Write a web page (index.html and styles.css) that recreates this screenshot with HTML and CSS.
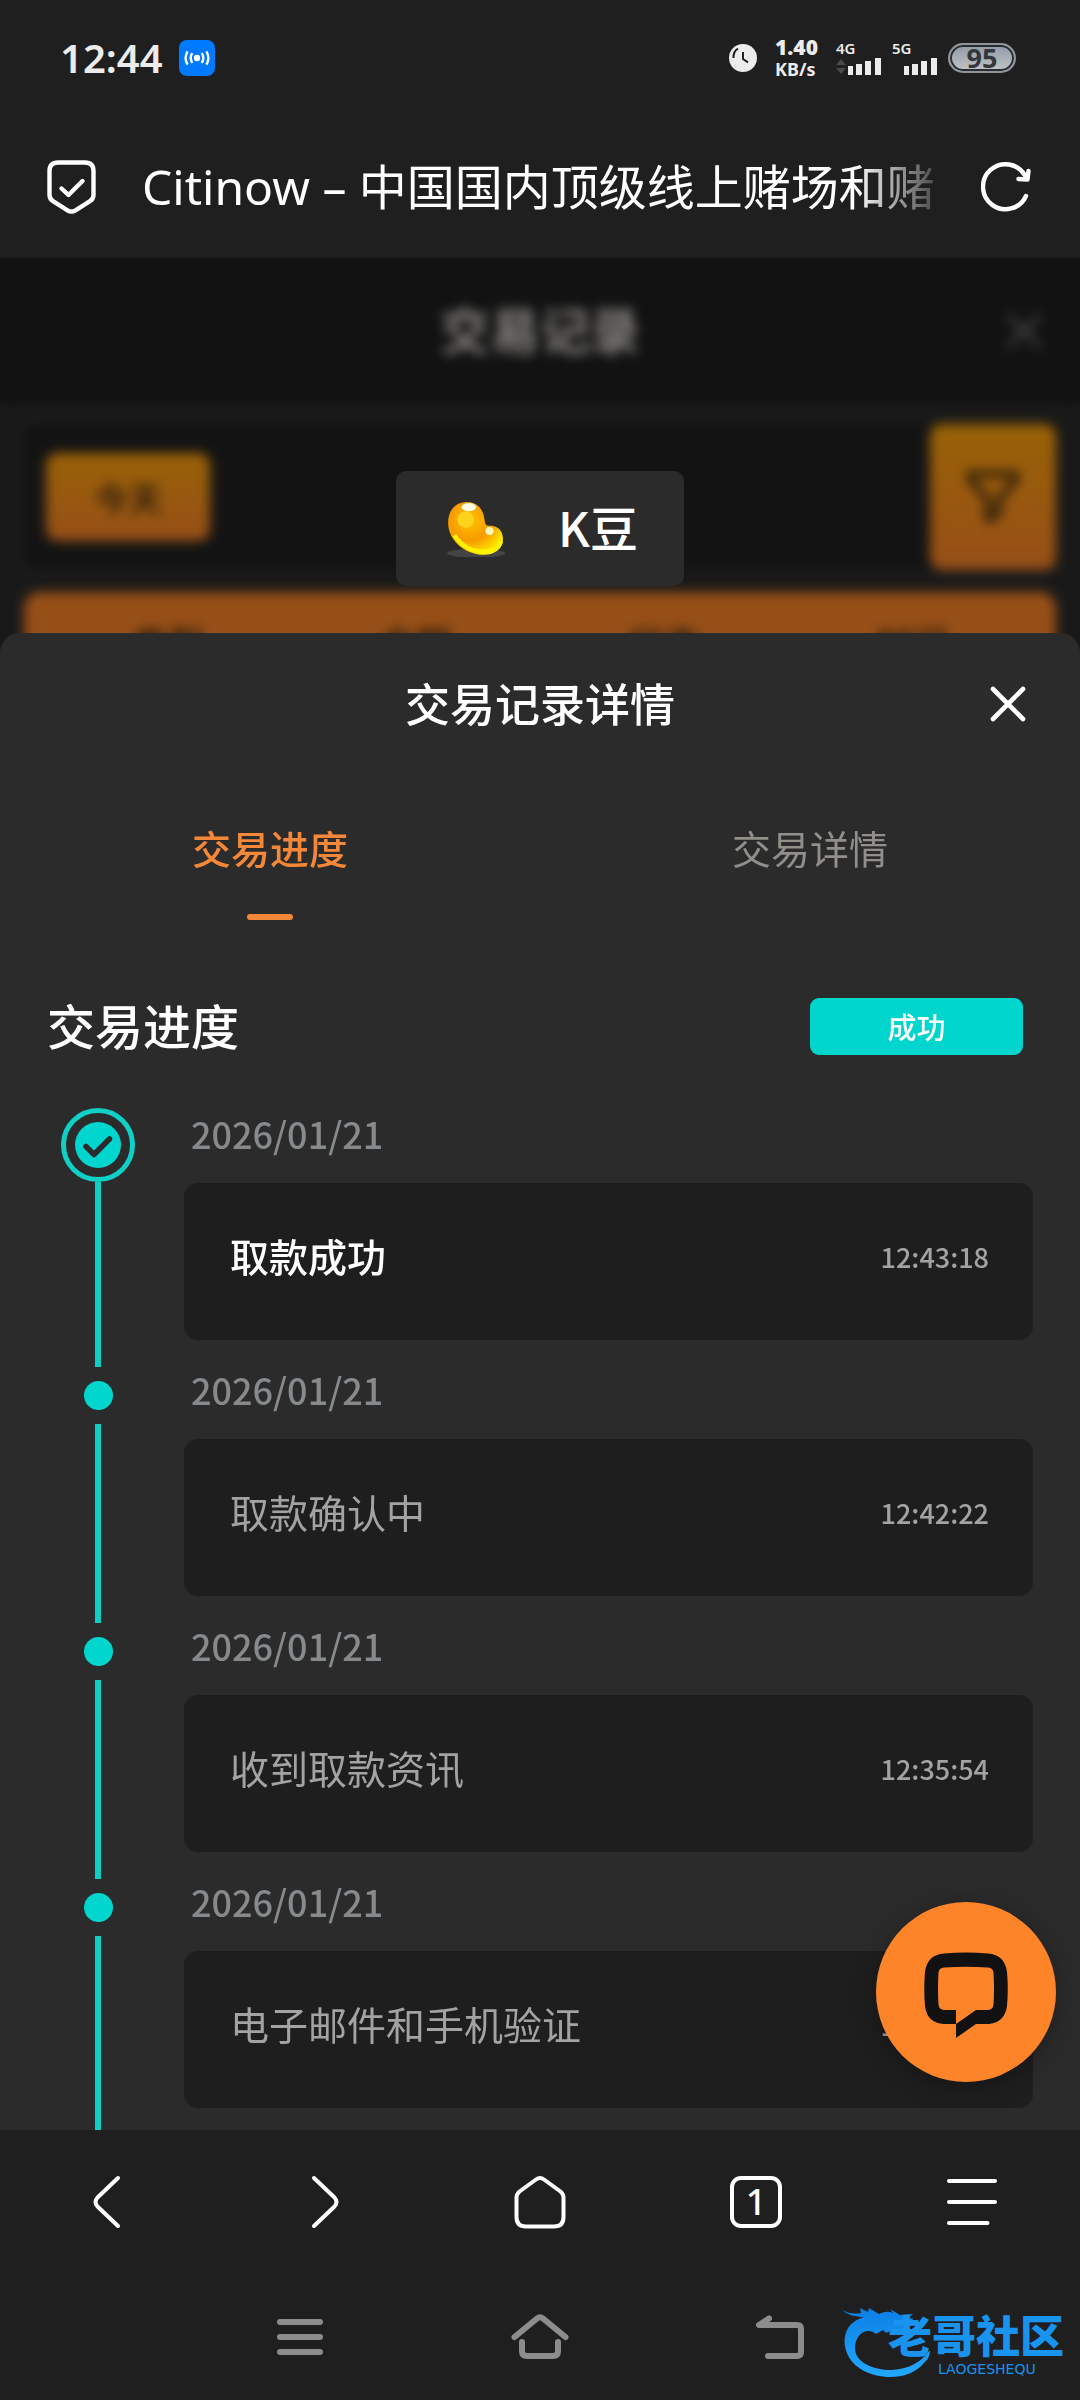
FILE: index.html
```
<!DOCTYPE html>
<html lang="zh-CN">

<head>
    <meta charset="UTF-8">
    <meta name="viewport" content="width=device-width, initial-scale=1.0">
    <title>Citinow – 交易记录详情</title>
    <link rel="stylesheet" href="styles.css">
</head>

<body>
    <!-- Status bar -->
    <div class="status-bar">
        <div class="status-left">
            <span class="clock-text">12:44</span>
            <svg class="cast" viewBox="0 0 36 36">
                <rect width="36" height="36" rx="8" fill="#007aff"/>
                <circle cx="18" cy="18" r="3.2" fill="#fff"/>
                <path d="M13.2 13.2q-3 4.8 0 9.6M22.8 13.2q3 4.8 0 9.6M8.6 11.4q-4 6.6 0 13.2M27.4 11.4q4 6.6 0 13.2" fill="none" stroke="#fff" stroke-width="2.4"/>
            </svg>
        </div>
        <div class="status-right">
            <svg class="alarm" viewBox="0 0 28 28">
                <circle cx="14" cy="14" r="14" fill="#ececec"/>
                <path d="M14 8v7l5 3.4M4.4 14q0-7 4.6-9.4" fill="none" stroke="#1f1f1f" stroke-width="2" stroke-dasharray="20"/>
            </svg>
            <div class="speed"><b>1.40</b><span>KB/s</span></div>
            <div class="radio">
                <div class="signal">
                    <span>4G</span>
                    <svg viewBox="0 0 46 20">
                        <path d="M0 9l5-6 5 6zM0 12l5 6 5-6z" fill="#4a4a4a"/>
                        <path d="M12 10h5v9h-5zM20 8h6v11h-6zM29 5h6v14h-6zM39 2h6v17h-6z" fill="#ececec"/>
                    </svg>
                </div>
                <div class="signal">
                    <span>5G</span>
                    <svg viewBox="0 0 46 20">
                        <path d="M12 10h5v9h-5zM20 8h6v11h-6zM29 5h6v14h-6zM39 2h6v17h-6z" fill="#ececec"/>
                    </svg>
                </div>
                <div class="battery">95</div>
            </div>
        </div>
    </div>

    <!-- Address bar -->
    <div class="address-bar">
        <button class="icon-btn" aria-label="安全">
            <svg class="shield" viewBox="0 0 49 54" fill="none" stroke="#fff" stroke-width="4.4" stroke-linecap="round" stroke-linejoin="round">
                <path d="M11 2.5h27q8.500 0 8.500 8.500v24q0 4-3.500 6.200L28.500 50.300q-4 2.400-8 0L6 41.200Q2.500 39 2.500 35V11q0-8.500 8.500-8.500z"/>
                <path d="M14.500 28.500l7 6.500 14-14"/>
            </svg>
        </button>
        <div class="page-title">Citinow – 中国国内顶级线上赌场和赌</div>
        <button class="icon-btn" aria-label="刷新">
            <svg class="reload" viewBox="0 0 50 50" fill="none" stroke="#fff" stroke-width="4.400" stroke-linecap="round" stroke-linejoin="round">
                <path d="M45 34A22.500 22.500 0 1 1 44 13.500"/>
                <path d="M47.500 9l-1 8.500-9-.500"/>
            </svg>
        </button>
    </div>

    <div class="viewport">
        <!-- Records page under the sheet -->
        <div class="records">
            <div class="records-header">
                <h2>交易记录</h2>
                <svg class="records-close" viewBox="0 0 36 36" stroke="#6a6a6a" stroke-width="5" stroke-linecap="round">
                    <path d="M3 3l30 30M33 3L3 33"/>
                </svg>
            </div>
            <div class="filter-bar">
                <button class="today">今天</button>
                <button class="filter" aria-label="筛选">
                    <svg viewBox="0 0 54 54" fill="none" stroke="#3a2a10" stroke-width="6" stroke-linejoin="round">
                        <path d="M4 4h46v6L33 29v14l-11 7V29L4 10z"/>
                    </svg>
                </button>
            </div>
            <div class="records-columns">
                <span>类型</span><span>金额</span><span>状态</span><span>时间</span>
            </div>
        </div>
        <div class="overlay"></div>

        <div class="toast">
            <svg class="bean" viewBox="0 0 58 54">
                <defs>
                    <radialGradient id="gold" cx="0.4" cy="0.35" r="0.7">
                        <stop offset="0" stop-color="#ffc400"/>
                        <stop offset="0.55" stop-color="#f79a00"/>
                        <stop offset="1" stop-color="#fff000"/>
                    </radialGradient>
                </defs>
                <ellipse cx="29" cy="49.500" rx="28" ry="4.500" fill="#444"/>
                <path d="M20 0C30 0 36 7 37 16c1 6 1 7 6 7 7 0 12 5 12 13 0 9-8 15-18 15C18 51 2 37 2 20 2 8 9 0 20 0z" fill="url(#gold)"/>
                <circle cx="19" cy="17" r="8" fill="#ffd21e"/>
                <ellipse cx="22" cy="5" rx="7" ry="4" fill="#fffbe0"/>
                <ellipse cx="42" cy="28" rx="4" ry="4" fill="#fff7b8"/>
                <path d="M8 32q10 16 30 16 13-1 15-10" fill="none" stroke="#fff200" stroke-width="4"/>
            </svg>
            <span>K豆</span>
        </div>

        <!-- Detail sheet -->
        <div class="sheet">
            <div class="sheet-header">
                <h1>交易记录详情</h1>
                <button class="sheet-close" aria-label="关闭">
                    <svg viewBox="0 0 36 36" stroke="#fff" stroke-width="4.600" stroke-linecap="round">
                        <path d="M3 3l30 30M33 3L3 33"/>
                    </svg>
                </button>
            </div>

            <div class="tabs" role="tablist">
                <button class="tab active" role="tab">交易进度</button>
                <button class="tab" role="tab">交易详情</button>
            </div>

            <div class="section-head">
                <h2>交易进度</h2>
                <span class="state">成功</span>
            </div>

            <ul class="timeline">
                <li class="step done">
                    <div class="marker">
                        <svg class="check" viewBox="0 0 74 74">
                            <circle cx="37" cy="37" r="34.500" fill="none" stroke="#0fd0c6" stroke-width="5"/>
                            <circle cx="37" cy="37" r="23" fill="#00d5ce"/>
                            <path d="M25 38.500l8 8L48.500 31" fill="none" stroke="#2b2b2b" stroke-width="5.500" stroke-linecap="round" stroke-linejoin="round"/>
                        </svg>
                    </div>
                    <div class="step-body">
                        <div class="date">2026/01/21</div>
                        <div class="card"><span>取款成功</span><time>12:43:18</time></div>
                    </div>
                </li>
                <li class="step">
                    <div class="marker"><i class="dot"></i></div>
                    <div class="step-body">
                        <div class="date">2026/01/21</div>
                        <div class="card"><span>取款确认中</span><time>12:42:22</time></div>
                    </div>
                </li>
                <li class="step">
                    <div class="marker"><i class="dot"></i></div>
                    <div class="step-body">
                        <div class="date">2026/01/21</div>
                        <div class="card"><span>收到取款资讯</span><time>12:35:54</time></div>
                    </div>
                </li>
                <li class="step">
                    <div class="marker"><i class="dot"></i></div>
                    <div class="step-body">
                        <div class="date">2026/01/21</div>
                        <div class="card"><span>电子邮件和手机验证</span><time>12:35:54</time></div>
                    </div>
                </li>
            </ul>
        </div>

        <button class="chat" aria-label="在线客服">
            <svg viewBox="0 0 84 86">
                <path fill="#111" fill-rule="evenodd" d="M20 1.500Q42-.500 64 1.500 81 3 83 20q1.500 17 0 34-2 16-18 18H52L32 86V72H20Q3 71 1 54-.500 37 1 20 3 3 20 1.500zM20 15.500q-5 .5-5.500 5-1 16.500 0 32 .5 5 5.500 5.500h12v14l20-14h12q5-.5 5.500-5.500 1-15.500 0-32-.5-4.500-5.500-5-22-1.500-44 0z"/>
            </svg>
        </button>
    </div>

    <!-- Browser toolbar -->
    <nav class="browser-nav">
        <button aria-label="后退">
            <svg viewBox="0 0 54 54"><path d="M37 3L16.500 22.500q-4 4.500 0 9L37 51"/></svg>
        </button>
        <button aria-label="前进">
            <svg viewBox="0 0 54 54"><path d="M17 3l20.500 19.500q4 4.500 0 9L17 51"/></svg>
        </button>
        <button aria-label="主页">
            <svg viewBox="0 0 54 54"><path d="M23 4.500q4-3 8 0l16.500 12q3 2.500 3 6V42q0 9.500-9.500 9.500H13Q3.500 51.500 3.500 42V22.500q0-3.500 3-6z"/></svg>
        </button>
        <button aria-label="标签页"><span class="tab-count">1</span></button>
        <button aria-label="菜单">
            <svg viewBox="0 0 54 54"><path d="M4 6h46M4 27h46M4 48h38.500"/></svg>
        </button>
    </nav>

    <!-- System navigation -->
    <nav class="system-nav">
        <button aria-label="最近任务">
            <svg viewBox="0 0 58 46"><path d="M9 8h40M9 23h40M9 38h40"/></svg>
        </button>
        <button aria-label="桌面">
            <svg viewBox="0 0 58 46"><path d="M3.500 23L26 4.500q3-2.500 6 0L54.500 23M11 28v9q0 5 5 5h26q5 0 5-5v-9"/></svg>
        </button>
        <button aria-label="返回">
            <svg viewBox="0 0 58 46"><path d="M18 4.500L8 11h38q4 0 4 4v23q0 4-4 4H17"/></svg>
        </button>
    </nav>

    <div class="watermark">
        <svg viewBox="0 0 90 70">
            <defs>
                <linearGradient id="sky" x1="0" y1="0" x2="0" y2="1">
                    <stop offset="0" stop-color="#0b7fe6"/>
                    <stop offset="1" stop-color="#23a8fb"/>
                </linearGradient>
            </defs>
            <path fill="url(#sky)" d="M0 2q9 5 19 3l-1-5 8 4 1-4 10 6q8-4 14-1l-3-4 10 6 13-1-6 5 6-1-2 6-12 1 11 3-2 5-14-4-8 4-3-3-7 4-3-2C22 20 13 28 13 40 13 54 30 62 50 62 68 61 80 53 88 42q0 8-6 13C68 72 40 72 22 63 4 54-2 34 6 20 10 14 16 11 22 9 14 9 6 7 0 2z"/>
        </svg>
        <div class="watermark-text">
            <strong>老哥社区</strong>
            <small>LAOGESHEQU</small>
        </div>
    </div>
</body>

</html>
```
FILE: styles.css
```
/* Global Styles */
* {
    margin: 0;
    padding: 0;
    box-sizing: border-box;
}

body {
    display: flex;
    flex-direction: column;
    height: 100vh;
    background: #1f1f1f;
    color: #fff;
    font-family: "Noto Sans CJK SC", "Noto Sans", sans-serif;
    overflow: hidden;
}

button {
    background: none;
    border: none;
    color: inherit;
    font-family: inherit;
    cursor: pointer;
}

svg {
    display: block;
}

/* Status bar */
.status-bar {
    display: flex;
    justify-content: space-between;
    align-items: center;
    height: 116px;
    padding: 0 64px 0 60px;
    color: #ececec;
    font-family: "Noto Sans", sans-serif;
}

.status-left,
.status-right,
.radio {
    display: flex;
    align-items: center;
}

.status-left {
    gap: 16px;
}

.status-right {
    gap: 18px;
}

.radio {
    gap: 10px;
}

.clock-text {
    font-size: 40px;
    font-weight: 600;
    line-height: 48px;
}

.cast {
    width: 36px;
}

.alarm {
    width: 28px;
}

.speed {
    display: flex;
    flex-direction: column;
    font-size: 18px;
    font-weight: 700;
    line-height: 22px;
}

.speed b {
    font-size: 21px;
}

.signal {
    display: flex;
    flex-direction: column;
    font-size: 15px;
    font-weight: 600;
    line-height: 16px;
}

.signal svg {
    width: 46px;
}

.battery {
    width: 68px;
    height: 30px;
    border: 2px solid #8f959b;
    border-radius: 15px;
    box-shadow: inset 0 0 0 2px #2a2d30;
    background: linear-gradient(#8f9aa8, #c4c4c4);
    color: #33373b;
    font-size: 27px;
    font-weight: 700;
    line-height: 26px;
    text-align: center;
}

/* Address bar */
.address-bar {
    display: flex;
    align-items: center;
    gap: 46px;
    height: 142px;
    padding: 0 49px 0 47px;
}

.icon-btn {
    flex-shrink: 0;
}

.shield {
    width: 49px;
}

.reload {
    width: 50px;
}

.page-title {
    flex: 1;
    overflow: hidden;
    white-space: nowrap;
    font-family: "Noto Sans", "Noto Sans CJK SC", sans-serif;
    font-size: 48px;
    line-height: 72px;
    -webkit-mask-image: linear-gradient(to right, #000 calc(100% - 80px), rgba(0, 0, 0, 0.2));
    mask-image: linear-gradient(to right, #000 calc(100% - 80px), rgba(0, 0, 0, 0.2));
}

/* Records page */
.viewport {
    position: relative;
    flex: 1;
    display: flex;
    flex-direction: column;
    min-height: 0;
    padding-top: 375px;
    overflow: hidden;
    background: #2b2b2b;
}

.records,
.overlay {
    position: absolute;
    inset: 0;
}

.overlay {
    background: rgba(0, 0, 0, 0.4);
    backdrop-filter: blur(6px);
}

.records-header {
    display: grid;
    grid-template-columns: 1fr auto 1fr;
    align-items: center;
    height: 146px;
    padding: 0 38px;
    background: #1e1e1e;
}

.records-header h2 {
    grid-column: 2;
    padding-bottom: 6px;
    color: #d8d4ce;
    font-size: 50px;
    font-weight: 700;
}

.records-close {
    justify-self: end;
    width: 36px;
}

.filter-bar {
    display: flex;
    justify-content: space-between;
    align-items: center;
    height: 146px;
    margin: 20px 24px;
    padding-left: 22px;
    border-radius: 12px;
    background: #212121;
}

.today {
    width: 164px;
    height: 88px;
    border-radius: 12px;
    background: linear-gradient(#ffa30a, #fc8428);
    color: #3a2a10;
    font-size: 34px;
    font-weight: 500;
}

.filter {
    display: flex;
    justify-content: center;
    align-items: center;
    width: 126px;
    height: 146px;
    border-radius: 12px;
    background: linear-gradient(#ffa30a, #fc8428);
}

.filter svg {
    width: 54px;
}

.records-columns {
    display: grid;
    grid-template-columns: repeat(4, 1fr);
    margin: 22px 24px 0;
    padding: 24px 20px;
    border-radius: 16px;
    background: #fc8428;
    color: #3a2a10;
    font-size: 36px;
    font-weight: 500;
    text-align: center;
}

/* Toast */
.toast {
    position: absolute;
    top: 213px;
    left: 50%;
    display: flex;
    align-items: center;
    gap: 52px;
    height: 115px;
    padding: 0 46px 6px 50px;
    border-radius: 10px;
    background: #2b2b2b;
    font-size: 48px;
    font-weight: 500;
    white-space: nowrap;
    transform: translateX(-50%);
}

.bean {
    width: 60px;
    margin-top: 8px;
}

/* Detail sheet */
.sheet {
    position: relative;
    flex: 1;
    min-height: 0;
    overflow: hidden;
    border-radius: 20px 20px 0 0;
    background: #2b2b2b;
}

.sheet-header {
    display: grid;
    grid-template-columns: 1fr auto 1fr;
    align-items: center;
    height: 142px;
    padding: 0 54px;
}

.sheet-header h1 {
    grid-column: 2;
    padding-bottom: 4px;
    font-size: 45px;
    font-weight: 500;
}

.sheet-close {
    justify-self: end;
}

.sheet-close svg {
    width: 36px;
}

.tabs {
    display: flex;
}

.tab {
    flex: 1;
    display: flex;
    flex-direction: column;
    align-items: center;
    padding-top: 42px;
    color: #928f8b;
    font-size: 39px;
    line-height: 60px;
}

.tab::after {
    content: "";
    width: 46px;
    height: 6px;
    margin-top: 37px;
    border-radius: 3px;
}

.tab.active {
    color: #f58838;
    font-weight: 500;
}

.tab.active::after {
    background: #f58838;
}

.section-head {
    display: flex;
    justify-content: space-between;
    align-items: center;
    margin: 78px 57px 53px 47px;
}

.section-head h2 {
    padding-bottom: 4px;
    font-size: 48px;
    font-weight: 500;
    line-height: 53px;
}

.state {
    width: 213px;
    border-radius: 9px;
    background: #00d5ce;
    font-size: 29px;
    font-weight: 500;
    line-height: 57px;
    text-align: center;
}

/* Timeline */
.timeline {
    list-style: none;
    padding: 0 47px;
}

.step {
    display: grid;
    grid-template-columns: 102px 1fr;
    column-gap: 35px;
}

.marker {
    display: flex;
    flex-direction: column;
    align-items: center;
}

.marker::after {
    content: "";
    flex: 1;
    width: 6px;
    background: #0fd0c6;
}

.check {
    width: 74px;
}

.dot {
    width: 29px;
    height: 29px;
    margin: 14px 0;
    border-radius: 50%;
    background: #00d5ce;
}

.step-body {
    padding-bottom: 27px;
}

.step.done .step-body {
    padding-top: 3px;
}

.date {
    padding-left: 7px;
    color: #868a8c;
    font-size: 36px;
    font-weight: 500;
    line-height: 44px;
}

.card {
    display: flex;
    justify-content: space-between;
    align-items: center;
    margin-top: 28px;
    padding: 42px 44px 55px 46px;
    border-radius: 14px;
    background: #1e1e1e;
    color: #a3a3a3;
    font-size: 39px;
    line-height: 60px;
}

.done .card span {
    color: #fff;
    font-weight: 500;
}

.card time {
    padding-top: 3px;
    font-size: 27px;
    font-weight: 500;
    line-height: 57px;
}

/* Chat button */
.chat {
    position: absolute;
    right: 24px;
    bottom: 48px;
    display: flex;
    justify-content: center;
    align-items: center;
    width: 180px;
    height: 180px;
    padding-top: 6px;
    border-radius: 50%;
    background: #fd8429;
    box-shadow: 0 4px 24px rgba(0, 0, 0, 0.3);
}

.chat svg {
    width: 84px;
}

/* Browser toolbar */
.browser-nav {
    display: flex;
    height: 144px;
}

.browser-nav button {
    flex: 1;
    display: flex;
    justify-content: center;
    align-items: center;
}

.browser-nav svg {
    width: 54px;
    fill: none;
    stroke: #fff;
    stroke-width: 4;
    stroke-linecap: round;
    stroke-linejoin: round;
}

.tab-count {
    width: 52px;
    height: 52px;
    border: 4px solid #fff;
    border-radius: 11px;
    font-family: "Noto Sans", sans-serif;
    font-size: 36px;
    font-weight: 500;
    line-height: 44px;
}

/* System navigation */
.system-nav {
    display: flex;
    justify-content: center;
    height: 126px;
}

.system-nav button {
    display: flex;
    justify-content: center;
    align-items: center;
    width: 240px;
}

.system-nav svg {
    width: 58px;
    fill: none;
    stroke: #8c8c8c;
    stroke-width: 6;
    stroke-linecap: round;
    stroke-linejoin: round;
}

/* Watermark */
.watermark {
    position: absolute;
    right: 16px;
    bottom: 22px;
    display: flex;
    align-items: flex-end;
    color: #1a93ee;
}

.watermark svg {
    width: 90px;
}

.watermark-text {
    display: flex;
    flex-direction: column;
    margin-left: -44px;
}

.watermark strong {
    font-size: 44px;
    font-weight: 900;
    line-height: 52px;
}

.watermark small {
    padding-left: 50px;
    font-family: "DejaVu Sans", sans-serif;
    font-size: 14px;
    line-height: 18px;
}
```
